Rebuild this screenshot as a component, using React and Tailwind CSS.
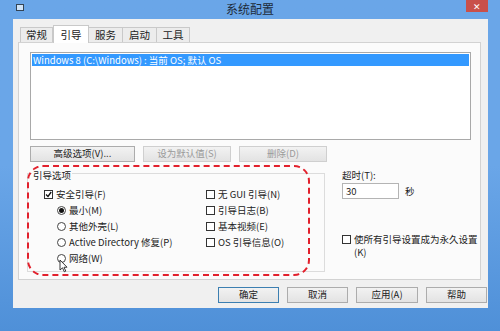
const font = { fontFamily: '"Noto Sans CJK SC", "Liberation Sans", sans-serif' };

const Check = ({ checked }) => (
  <span className="w-[9px] h-[9px] border border-[#333] bg-white flex items-center justify-center shrink-0">
    {checked && (
      <svg width="7" height="7" viewBox="0 0 7 7">
        <path d="M1 3.5 L3 5.5 L6.2 1" stroke="#111" strokeWidth="1.3" fill="none" />
      </svg>
    )}
  </span>
);

const Radio = ({ checked }) => (
  <span className="w-[9px] h-[9px] rounded-full border border-[#444] bg-white flex items-center justify-center shrink-0">
    {checked && <span className="w-[5px] h-[5px] rounded-full bg-[#111]" />}
  </span>
);

const Btn = ({ children, disabled, primary, className = "" }) => (
  <div
    className={`h-[16px] flex items-center justify-center border text-[9.5px] leading-none bg-gradient-to-b from-[#f2f2f2] to-[#e3e3e3] ${
      primary ? "border-[#3c7fb1]" : "border-[#acacac]"
    } ${disabled ? "text-[#9a9a9a] border-[#cfcfcf]" : "text-[#222]"} ${className}`}
  >
    {children}
  </div>
);

export default function App() {
  return (
    <div
      className="w-[500px] h-[331px] relative overflow-hidden bg-gradient-to-b from-[#6aa6e8] via-[#6aa6e8] to-[#4f90d8]"
      style={font}
    >
      {/* title bar */}
      <div className="h-[19px] flex items-start relative">
        <div className="ml-[16px] mt-[4px] w-[8px] h-[7px] border border-[#345] bg-[#cfe3f7]" />
        <div className="absolute left-0 right-0 top-[2px] text-center text-[12px] leading-[14px] text-[#1d2b3a]">
          系统配置
        </div>
        <div className="ml-auto mr-[12px] w-[22px] h-[12px] bg-[#c9504a] text-white text-[9px] leading-none flex items-center justify-center">
          ✕
        </div>
      </div>

      {/* window body */}
      <div className="flex">
        <div className="w-[13px]" />
        <div className="w-[475px] h-[289px] bg-[#f0f0f0] pl-[5px] pt-[5px] flex flex-col">
          {/* tabs */}
          <div className="flex items-end ml-[2px] h-[18px] text-[10.5px] text-[#222]">
            <div className="w-[33px] h-[15px] border border-[#c9c9c9] border-b-0 bg-[#ececec] flex items-center justify-center">常规</div>
            <div className="w-[36px] h-[18px] border border-[#c9c9c9] border-b-0 bg-white flex items-center justify-center relative z-10 -mb-[1px]">引导</div>
            <div className="w-[34px] h-[15px] border border-[#c9c9c9] border-b-0 border-l-0 bg-[#ececec] flex items-center justify-center">服务</div>
            <div className="w-[34px] h-[15px] border border-[#c9c9c9] border-b-0 border-l-0 bg-[#ececec] flex items-center justify-center">启动</div>
            <div className="w-[33px] h-[15px] border border-[#c9c9c9] border-b-0 border-l-0 bg-[#ececec] flex items-center justify-center">工具</div>
          </div>

          {/* tab page */}
          <div className="w-[463px] h-[238px] border border-[#d2d2d2] bg-[#fbfbfb] pl-[11px] pt-[9px] relative">
            <div className="w-[441px] h-[88px] border border-[#a9a9a9] bg-white pt-[1px] px-[1px]">
              <div className="h-[12px] bg-[#3399ff] text-white text-[9.5px] leading-[12px] pl-[1px] whitespace-nowrap">
                Windows 8 (C:\Windows) : 当前 OS; 默认 OS
              </div>
            </div>

            <div className="flex gap-[8px] mt-[6px]">
              <Btn className="w-[105px]">高级选项(V)...</Btn>
              <Btn className="w-[88px]" disabled>设为默认值(S)</Btn>
              <Btn className="w-[88px]" disabled>删除(D)</Btn>
            </div>

            <div className="flex mt-[11px]">
              {/* group box */}
              <div className="w-[298px] h-[99px] border border-[#dcdcdc] -ml-[3px] relative pt-[14px] text-[9.5px] text-[#222]">
                <div className="absolute -top-[6px] left-[4px] px-[1px] bg-[#fbfbfb] leading-[14px]">引导选项</div>
                <div className="flex">
                  <div className="flex flex-col gap-[3px] w-[178px] pl-[16px]">
                    <div className="h-[13px] flex items-center gap-[3px]"><Check checked />安全引导(F)</div>
                    <div className="h-[13px] flex items-center gap-[3px] pl-[13px]"><Radio checked />最小(M)</div>
                    <div className="h-[13px] flex items-center gap-[3px] pl-[13px]"><Radio />其他外壳(L)</div>
                    <div className="h-[13px] flex items-center gap-[3px] pl-[13px]"><Radio />Active Directory 修复(P)</div>
                    <div className="h-[13px] flex items-center gap-[3px] pl-[13px]"><Radio />网络(W)</div>
                  </div>
                  <div className="flex flex-col gap-[3px]">
                    <div className="h-[13px] flex items-center gap-[3px]"><Check />无 GUI 引导(N)</div>
                    <div className="h-[13px] flex items-center gap-[3px]"><Check />引导日志(B)</div>
                    <div className="h-[13px] flex items-center gap-[3px]"><Check />基本视频(E)</div>
                    <div className="h-[13px] flex items-center gap-[3px]"><Check />OS 引导信息(O)</div>
                  </div>
                </div>
              </div>

              {/* timeout */}
              <div className="ml-[17px] text-[9.5px] text-[#222] -mt-[5px]">
                <div className="leading-[14px]">超时(T):</div>
                <div className="flex items-center mt-[1px]">
                  <div className="w-[57px] h-[16px] border border-[#b4b4b4] bg-white pl-[3px] leading-[14px]">30</div>
                  <div className="ml-[6px]">秒</div>
                </div>
                <div className="flex items-start gap-[3px] mt-[34px] w-[135px]">
                  <span className="mt-[2px]"><Check /></span>
                  <div className="leading-[13px] whitespace-nowrap">使所有引导设置成为永久设置<br />(K)</div>
                </div>
              </div>
            </div>
          </div>

          {/* bottom buttons */}
          <div className="flex gap-[8px] mt-[7px] ml-[200px]">
            <Btn className="w-[61px]" primary>确定</Btn>
            <Btn className="w-[61px]">取消</Btn>
            <Btn className="w-[62px]">应用(A)</Btn>
            <Btn className="w-[61px]">帮助</Btn>
          </div>
        </div>
      </div>

      {/* red dashed annotation */}
      <div className="absolute left-[27px] top-[165px] w-[283px] h-[111px] rounded-[16px] border-2 border-dashed border-[#e2202c] pointer-events-none" />

      {/* mouse cursor */}
      <svg className="absolute left-[59px] top-[259px]" width="9" height="14" viewBox="0 0 9 14">
        <path d="M1 1 L1 11 L3.5 8.8 L5.3 12.8 L6.8 12.1 L5 8.3 L8 8.2 Z" fill="#fff" stroke="#222" strokeWidth="0.9" />
      </svg>
    </div>
  );
}
